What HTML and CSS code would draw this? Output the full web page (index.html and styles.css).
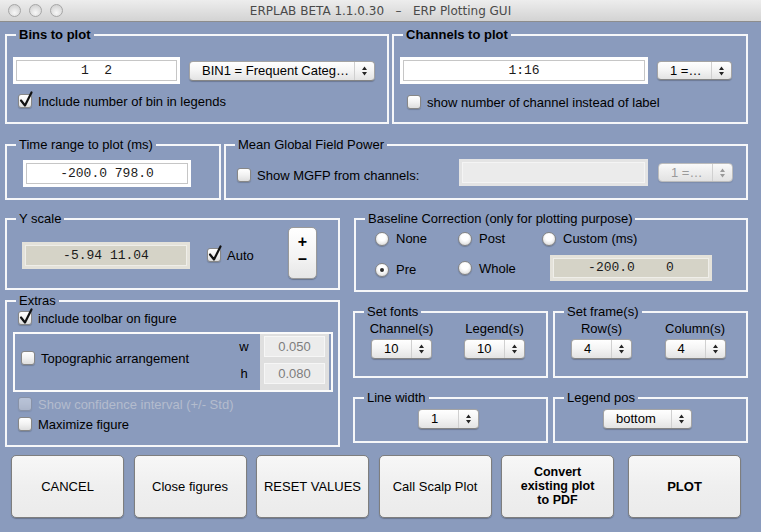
FILE: index.html
```html
<!DOCTYPE html>
<html lang="en">
<head>
<meta charset="utf-8">
<title>ERP Plotting GUI</title>
<link rel="stylesheet" href="styles.css">
</head>
<body>
<div class="window">
  <header class="titlebar">
    <div class="lights"><span class="light"></span><span class="light"></span><span class="light"></span></div>
    <div class="title">ERPLAB BETA 1.1.0.30   –   ERP Plotting GUI</div>
    <div></div>
  </header>

  <main class="content">
    <div class="row row1">
      <fieldset class="panel bins">
        <legend class="strong">Bins to plot</legend>
        <div class="body-bins">
          <div class="line">
            <div class="edit bins-edit">1  2</div>
            <div class="popup bins-popup"><span class="ptext">BIN1 = Frequent Categ…</span><span class="parrows"><svg width="5" height="10" viewBox="0 0 5 10"><path d="M0 4L2.5 0.5L5 4z M0 6L2.5 9.5L5 6z"/></svg></span></div>
          </div>
          <div class="check bins-check"><span class="cb"><svg class="tick" width="12" height="12" viewBox="0 0 12 12"><path d="M2 5.5L6 10.5L12.5 -2.5"/></svg></span><span>Include number of bin in legends</span></div>
        </div>
      </fieldset>

      <fieldset class="panel channels">
        <legend class="strong">Channels to plot</legend>
        <div class="body-bins">
          <div class="line">
            <div class="edit chan-edit">1:16</div>
            <div class="popup chan-popup"><span class="ptext">1 =…</span><span class="parrows"><svg width="5" height="10" viewBox="0 0 5 10"><path d="M0 4L2.5 0.5L5 4z M0 6L2.5 9.5L5 6z"/></svg></span></div>
          </div>
          <div class="check chan-check"><span class="cb"></span><span>show number of channel instead of label</span></div>
        </div>
      </fieldset>
    </div>

    <div class="row row2">
      <fieldset class="panel time">
        <legend>Time range to plot (ms)</legend>
        <div class="body-time">
          <div class="edit time-edit">-200.0 798.0</div>
        </div>
      </fieldset>

      <fieldset class="panel mgfp">
        <legend>Mean Global Field Power</legend>
        <div class="body-mgfp">
          <div class="check mgfp-check"><span class="cb"></span><span>Show MGFP from channels:</span></div>
          <div class="disfield mgfp-edit"></div>
          <div class="popup disabled mgfp-popup"><span class="ptext">1 =…</span><span class="parrows"><svg width="5" height="10" viewBox="0 0 5 10"><path d="M0 4L2.5 0.5L5 4z M0 6L2.5 9.5L5 6z"/></svg></span></div>
        </div>
      </fieldset>
    </div>

    <div class="cols">
      <div class="left-col">
        <fieldset class="panel yscale">
          <legend>Y scale</legend>
          <div class="body-y">
            <div class="grayfield y-edit">-5.94 11.04</div>
            <div class="check auto"><span class="cb"><svg class="tick" width="12" height="12" viewBox="0 0 12 12"><path d="M2 5.5L6 10.5L12.5 -2.5"/></svg></span><span>Auto</span></div>
            <div class="pm"><span>+</span><span>–</span></div>
          </div>
        </fieldset>

        <fieldset class="panel extras">
          <legend>Extras</legend>
          <div class="body-extras">
            <div class="check indent"><span class="cb"><svg class="tick" width="12" height="12" viewBox="0 0 12 12"><path d="M2 5.5L6 10.5L12.5 -2.5"/></svg></span><span>include toolbar on figure</span></div>
            <div class="topo">
              <div class="check topo-check"><span class="cb"></span><span>Topographic arrangement</span></div>
              <div class="topo-labels"><span>w</span><span>h</span></div>
              <div class="topo-vals"><span class="topo-val">0.050</span><span class="topo-val">0.080</span></div>
            </div>
            <div class="check indent dis-row disabled-text"><span class="cb dis"></span><span>Show confidence interval (+/- Std)</span></div>
            <div class="check indent max-row"><span class="cb"></span><span>Maximize figure</span></div>
          </div>
        </fieldset>
      </div>

      <div class="right-col">
        <fieldset class="panel baseline">
          <legend>Baseline Correction (only for plotting purpose)</legend>
          <div class="body-base">
            <div class="radio"><span class="rb"></span><span>None</span></div>
            <div class="radio"><span class="rb"></span><span>Post</span></div>
            <div class="radio"><span class="rb"></span><span>Custom (ms)</span></div>
            <div class="radio pre"><span class="rb on"></span><span>Pre</span></div>
            <div class="radio"><span class="rb"></span><span>Whole</span></div>
            <div class="grayfield base-edit">-200.0    0</div>
          </div>
        </fieldset>

        <div class="grid4">
          <fieldset class="panel fonts">
            <legend>Set fonts</legend>
            <div class="body-pair">
              <div class="pair-col">
                <span class="plabel">Channel(s)</span>
                <div class="popup small"><span class="ptext">10</span><span class="parrows"><svg width="5" height="10" viewBox="0 0 5 10"><path d="M0 4L2.5 0.5L5 4z M0 6L2.5 9.5L5 6z"/></svg></span></div>
              </div>
              <div class="pair-col">
                <span class="plabel">Legend(s)</span>
                <div class="popup small"><span class="ptext">10</span><span class="parrows"><svg width="5" height="10" viewBox="0 0 5 10"><path d="M0 4L2.5 0.5L5 4z M0 6L2.5 9.5L5 6z"/></svg></span></div>
              </div>
            </div>
          </fieldset>

          <fieldset class="panel frame">
            <legend>Set frame(s)</legend>
            <div class="body-pair frame-pair">
              <div class="pair-col">
                <span class="plabel">Row(s)</span>
                <div class="popup small"><span class="ptext">4</span><span class="parrows"><svg width="5" height="10" viewBox="0 0 5 10"><path d="M0 4L2.5 0.5L5 4z M0 6L2.5 9.5L5 6z"/></svg></span></div>
              </div>
              <div class="pair-col">
                <span class="plabel">Column(s)</span>
                <div class="popup small"><span class="ptext">4</span><span class="parrows"><svg width="5" height="10" viewBox="0 0 5 10"><path d="M0 4L2.5 0.5L5 4z M0 6L2.5 9.5L5 6z"/></svg></span></div>
              </div>
            </div>
          </fieldset>

          <fieldset class="panel lw">
            <legend>Line width</legend>
            <div class="body-center lw-body">
              <div class="popup small"><span class="ptext">1</span><span class="parrows"><svg width="5" height="10" viewBox="0 0 5 10"><path d="M0 4L2.5 0.5L5 4z M0 6L2.5 9.5L5 6z"/></svg></span></div>
            </div>
          </fieldset>

          <fieldset class="panel lp">
            <legend>Legend pos</legend>
            <div class="body-center lp-body">
              <div class="popup legend-popup"><span class="ptext">bottom</span><span class="parrows"><svg width="5" height="10" viewBox="0 0 5 10"><path d="M0 4L2.5 0.5L5 4z M0 6L2.5 9.5L5 6z"/></svg></span></div>
            </div>
          </fieldset>
        </div>
      </div>
    </div>

    <div class="buttons">
      <button class="btn">CANCEL</button>
      <button class="btn">Close figures</button>
      <button class="btn">RESET VALUES</button>
      <button class="btn">Call Scalp Plot</button>
      <button class="btn strong convert">Convert<br>existing plot<br>to PDF</button>
      <button class="btn strong plot">PLOT</button>
    </div>
  </main>
</div>
</body>
</html>
```

FILE: styles.css
```css
* { box-sizing: border-box; }

html, body {
  margin: 0;
  padding: 0;
}

body {
  width: 761px;
  height: 532px;
  overflow: hidden;
  background: #8a9bbd;
  font-family: "Liberation Sans", Arial, sans-serif;
  font-size: 13px;
  color: #000;
}

/* ---------- title bar ---------- */
.titlebar {
  height: 22px;
  display: grid;
  grid-template-columns: 1fr auto 1fr;
  align-items: center;
  background: linear-gradient(#ededed, #d3d3d3);
  border-bottom: 1px solid #8d8d8d;
}

.lights {
  display: flex;
  gap: 8px;
  padding-left: 8px;
}

.light {
  width: 13px;
  height: 13px;
  border-radius: 50%;
  border: 1px solid #a6a6a6;
  background: radial-gradient(circle at 50% 70%, #f7f7f7 0%, #dedede 55%, #c9c9c9 100%);
}

.title {
  font-family: "DejaVu Sans", sans-serif;
  font-size: 12px;
  color: #4a4a4a;
  white-space: pre;
}

/* ---------- layout ---------- */
.content {
  padding-left: 5px;
}

.row {
  display: flex;
  align-items: flex-start;
}

.row1 {
  margin-top: 5px;
  gap: 3px;
}

.row2 {
  margin-top: 13px;
  gap: 3px;
}

.cols {
  display: flex;
  align-items: flex-start;
  margin-top: 11px;
}

.left-col {
  width: 335px;
}

.right-col {
  width: 395px;
  margin-left: 13px;
}

/* ---------- panels ---------- */
.panel {
  margin: 0;
  padding: 0;
  min-width: 0;
  border: 2px solid #f6f7f9;
}

.panel > legend {
  margin-left: 9px;
  padding: 0 3px;
  line-height: 16px;
  font-size: 13px;
}

.strong {
  font-weight: bold;
}

.bins { width: 384px; height: 97px; }
.channels { width: 356px; height: 97px; }
.time { width: 216px; height: 63px; }
.mgfp { width: 524px; height: 63px; }
.yscale { width: 335px; height: 79px; }
.extras { width: 335px; height: 154px; margin-top: 3px; }
.baseline { width: 394px; height: 81px; margin-left: 1px; }
.fonts, .frame { height: 74px; }
.lw, .lp { height: 53px; }

/* ---------- controls ---------- */
.line {
  display: flex;
  align-items: center;
}

.edit {
  height: 27px;
  background: #fff;
  border: 3px solid #fff;
  box-shadow: inset 0 0 0 1px #c6c6c6;
  font-family: "Liberation Mono", monospace;
  font-size: 13px;
  line-height: 21px;
  text-align: center;
  white-space: pre;
  color: #1b1b1b;
}

.grayfield {
  height: 27px;
  background: #d5d3c7;
  border: 3px solid #e4e2da;
  box-shadow: inset 0 0 0 1px #efeee9;
  font-family: "Liberation Mono", monospace;
  font-size: 13px;
  line-height: 21px;
  text-align: center;
  white-space: pre;
  color: #1b1b1b;
}

.disfield {
  height: 27px;
  background: #ebebeb;
  border: 3px solid #e4e4e4;
  box-shadow: inset 0 0 0 1px #f4f4f4;
}

.popup {
  display: flex;
  height: 20px;
  border: 1px solid #a4a4a4;
  border-bottom-color: #858585;
  border-radius: 4px;
  background: linear-gradient(#ffffff, #f5f5f5 45%, #e3e3e3);
  box-shadow: 0 1px 1px rgba(0, 0, 0, 0.22);
  white-space: nowrap;
  flex: none;
}

.ptext {
  flex: 1;
  padding-left: 12px;
  line-height: 18px;
  overflow: hidden;
  color: #000;
}

.parrows {
  width: 20px;
  flex: none;
  border-left: 1px solid #d0d0d0;
  display: flex;
  align-items: center;
  justify-content: center;
}

.parrows svg {
  display: block;
  fill: #252525;
}

.popup.disabled {
  border-color: #bcbcbc;
  background: linear-gradient(#fafafa, #eeeeee 45%, #e2e2e2);
  box-shadow: 0 1px 1px rgba(0, 0, 0, 0.1);
}

.popup.disabled .ptext { color: #9a9a9a; }
.popup.disabled .parrows svg { fill: #9a9a9a; }

.check {
  display: flex;
  align-items: center;
  gap: 6px;
  height: 16px;
  white-space: nowrap;
}

.cb {
  width: 14px;
  height: 14px;
  flex: none;
  border: 1px solid #878787;
  border-radius: 3px;
  background: linear-gradient(#ffffff, #f2f2f2 50%, #dedede);
  box-shadow: 0 1px 1px rgba(0, 0, 0, 0.18);
}

.cb.dis {
  opacity: 0.4;
}

.tick {
  display: block;
  overflow: visible;
}

.tick path {
  fill: none;
  stroke: #111;
  stroke-width: 2.2;
  stroke-linecap: round;
  stroke-linejoin: round;
}

.disabled-text {
  color: #b4bccd;
}

.radio {
  display: flex;
  align-items: center;
  gap: 7px;
  white-space: nowrap;
}

.rb {
  width: 14px;
  height: 14px;
  flex: none;
  border-radius: 50%;
  border: 1px solid #858585;
  background: radial-gradient(circle at 50% 35%, #ffffff 35%, #e6e6e6 70%, #cfcfcf 100%);
  box-shadow: 0 1px 1px rgba(0, 0, 0, 0.2);
  display: flex;
  align-items: center;
  justify-content: center;
}

.rb.on::after {
  content: "";
  width: 4px;
  height: 4px;
  border-radius: 50%;
  background: #2c2c2c;
}

/* ---------- row 1 ---------- */
.body-bins {
  padding: 14px 0 0 6px;
}

.bins-edit { width: 167px; }
.bins-popup { width: 186px; margin-left: 9px; }
.bins-check { margin: 9px 0 0 5px; }

.chan-edit { width: 248px; }
.chan-popup { width: 75px; height: 19px; margin-left: 9px; }
.chan-popup .ptext { padding-left: 12px; line-height: 17px; }
.chan-check { margin: 10px 0 0 7px; }

/* ---------- row 2 ---------- */
.body-time {
  padding: 7px 0 0 16px;
}

.time-edit { width: 168px; }

.body-mgfp {
  display: flex;
  align-items: center;
  padding: 6px 0 0 11px;
}

.mgfp-check { width: 222px; margin-top: 5px; }
.mgfp-edit { width: 189px; }
.mgfp-popup { width: 75px; height: 19px; margin-left: 10px; }
.mgfp-popup .ptext { line-height: 17px; }

/* ---------- Y scale ---------- */
.body-y {
  display: flex;
  align-items: flex-start;
  padding: 0 21px 0 15px;
}

.y-edit { width: 168px; margin-top: 15px; }
.auto { margin: 20px 0 0 17px; }

.pm {
  width: 29px;
  height: 52px;
  margin-left: auto;
  border: 1px solid #9a9a9a;
  border-radius: 5px;
  background: linear-gradient(#ffffff, #f3f3f3 60%, #e6e6e6);
  box-shadow: 0 1px 1px rgba(0, 0, 0, 0.25);
  display: flex;
  flex-direction: column;
  align-items: center;
  justify-content: center;
  padding-bottom: 6px;
  font-weight: bold;
  font-size: 16px;
  line-height: 17px;
}

/* ---------- Extras ---------- */
.body-extras {
  padding: 1px 0 0 6px;
}

.indent { margin-left: 5px; }

.topo {
  width: 320px;
  height: 60px;
  margin-top: 6px;
  border: 2px solid #fbfbfb;
  display: flex;
}

.topo-check {
  flex: 1;
  margin-top: 16px;
  padding-left: 6px;
}

.topo-labels {
  width: 16px;
  padding-top: 2px;
  display: flex;
  flex-direction: column;
  gap: 6px;
}

.topo-labels span {
  height: 21px;
  line-height: 21px;
  text-align: center;
}

.topo-vals {
  width: 69px;
  margin: 0 2px 0 8px;
  padding: 2px 4px;
  background: #dfdfdf;
  display: flex;
  flex-direction: column;
  gap: 6px;
}

.topo-val {
  height: 21px;
  line-height: 19px;
  text-align: center;
  background: #ececec;
  border: 1px solid #f6f6f6;
  color: #7d7d7d;
}

.dis-row { margin-top: 4px; }
.max-row { margin-top: 4px; }

/* ---------- Baseline ---------- */
.body-base {
  display: grid;
  grid-template-columns: 83px 84px auto;
  grid-template-rows: 23px 26px;
  row-gap: 5px;
  padding-left: 19px;
}

.pre { margin-top: 3px; }

.base-edit {
  width: 162px;
  height: 26px;
  line-height: 20px;
  margin-left: 8px;
}

/* ---------- fonts / frames ---------- */
.grid4 {
  display: grid;
  grid-template-columns: 195px 195px;
  column-gap: 5px;
  row-gap: 12px;
  margin-top: 12px;
}

.body-pair {
  display: grid;
  grid-template-columns: 93px 93px;
  padding-top: 1px;
}

.frame-pair {
  grid-template-columns: 93px 94px;
}

.pair-col {
  display: flex;
  flex-direction: column;
  align-items: center;
}

.plabel {
  line-height: 16px;
  white-space: nowrap;
}

.popup.small {
  width: 61px;
  margin-top: 2px;
}

.body-center {
  display: flex;
  justify-content: center;
  padding-top: 3px;
}

.lw-body { padding-right: 4px; }
.lw-body .popup.small { margin-top: 0; }
.lp-body { padding-right: 6px; }

.legend-popup { width: 89px; }

/* ---------- buttons ---------- */
.buttons {
  display: flex;
  gap: 9.5px;
  margin: 8px 0 0 6px;
}

.btn {
  width: 113px;
  height: 63px;
  padding: 0;
  border: 1px solid #7e7e7e;
  border-radius: 5px;
  background: linear-gradient(#f7f7f7, #efefef 50%, #ebebeb);
  box-shadow: 0 1px 1px rgba(0, 0, 0, 0.25);
  font-family: "Liberation Sans", Arial, sans-serif;
  font-size: 13px;
  color: #000;
  text-align: center;
}

.convert {
  font-size: 12.5px;
  line-height: 14px;
  padding-bottom: 2px;
}

.plot {
  margin-left: 4.5px;
}
```
